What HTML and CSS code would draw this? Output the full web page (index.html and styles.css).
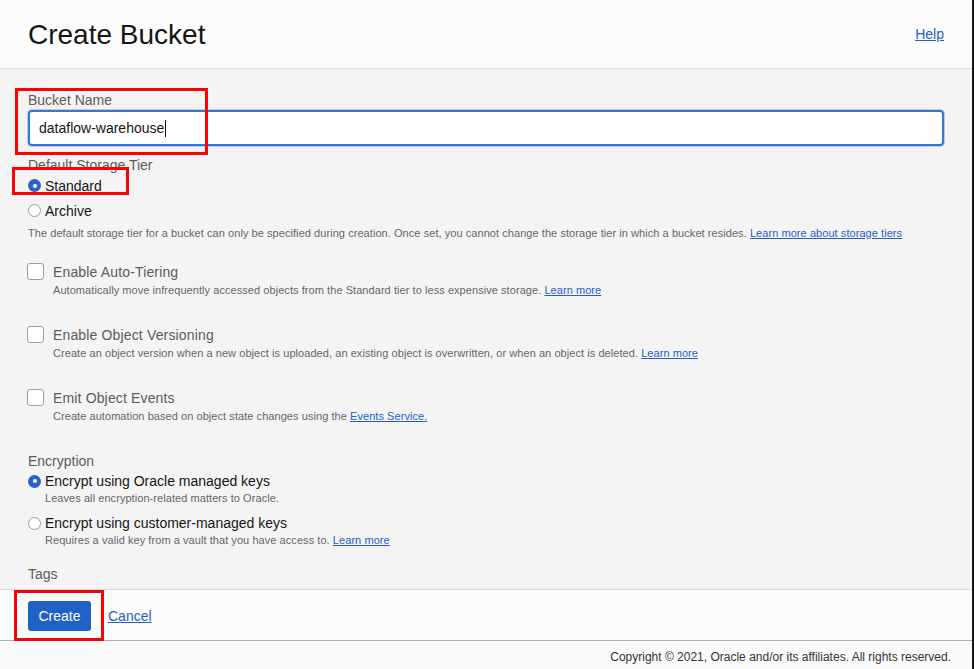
FILE: index.html
```html
<!DOCTYPE html>
<html lang="en">
<head>
<meta charset="utf-8">
<title>Create Bucket</title>
<link rel="stylesheet" href="styles.css">
</head>
<body>
<div class="page">
  <div class="panel">
    <header class="header">
      <h1 class="title">Create Bucket</h1>
      <a class="link help" href="#">Help</a>
    </header>

    <main class="content">
      <div class="field">
        <label class="label">Bucket Name</label>
        <div class="input"><span class="input-text">dataflow-warehouse</span><span class="caret"></span></div>
      </div>

      <div class="group tier">
        <div class="label label-tight">Default Storage Tier</div>
        <div class="radio-row"><span class="radio checked"></span><span class="radio-text">Standard</span></div>
        <div class="radio-row"><span class="radio"></span><span class="radio-text">Archive</span></div>
        <p class="hint">The default storage tier for a bucket can only be specified during creation. Once set, you cannot change the storage tier in which a bucket resides. <a class="link" href="#">Learn more about storage tiers</a></p>
      </div>

      <div class="check first">
        <span class="box"></span>
        <div class="check-body">
          <div class="check-label">Enable Auto-Tiering</div>
          <p class="hint">Automatically move infrequently accessed objects from the Standard tier to less expensive storage. <a class="link" href="#">Learn more</a></p>
        </div>
      </div>

      <div class="check">
        <span class="box"></span>
        <div class="check-body">
          <div class="check-label">Enable Object Versioning</div>
          <p class="hint">Create an object version when a new object is uploaded, an existing object is overwritten, or when an object is deleted. <a class="link" href="#">Learn more</a></p>
        </div>
      </div>

      <div class="check">
        <span class="box"></span>
        <div class="check-body">
          <div class="check-label">Emit Object Events</div>
          <p class="hint">Create automation based on object state changes using the <a class="link" href="#">Events Service.</a></p>
        </div>
      </div>

      <div class="group encryption">
        <div class="label">Encryption</div>
        <div class="opt">
          <div class="radio-row short"><span class="radio checked"></span><span class="radio-text">Encrypt using Oracle managed keys</span></div>
          <p class="hint indent">Leaves all encryption-related matters to Oracle.</p>
        </div>
        <div class="opt second">
          <div class="radio-row short"><span class="radio"></span><span class="radio-text">Encrypt using customer-managed keys</span></div>
          <p class="hint indent">Requires a valid key from a vault that you have access to. <a class="link" href="#">Learn more</a></p>
        </div>
      </div>

      <div class="label tags">Tags</div>
    </main>

    <div class="actions">
      <button class="btn-primary" type="button">Create</button>
      <a class="link cancel" href="#">Cancel</a>
    </div>

    <footer class="copyright">Copyright © 2021, Oracle and/or its affiliates. All rights reserved.</footer>
  </div>
  <div class="edge"></div>

  <div class="mark mark-name"></div>
  <div class="mark mark-standard"></div>
  <div class="mark mark-create"></div>
</div>
</body>
</html>
```

FILE: styles.css
```css
* { box-sizing: border-box; }

html, body {
  margin: 0;
  padding: 0;
  height: 100%;
}

body {
  font-family: "Liberation Sans", Arial, Helvetica, sans-serif;
  color: #161513;
  background: #f4f4f4;
  overflow: hidden;
}

.page {
  position: relative;
  display: flex;
  width: 974px;
  height: 669px;
}

.panel {
  flex: 1;
  display: flex;
  flex-direction: column;
  min-width: 0;
}

.edge {
  width: 2px;
  background: #161616;
}

/* header */
.header {
  height: 69px;
  flex: none;
  background: #fcfcfc;
  border-bottom: 1px solid #dcdcdc;
  display: flex;
  align-items: center;
  justify-content: space-between;
  padding: 2px 28px 0 28px;
}

.title {
  margin: 0;
  font-size: 28px;
  font-weight: 400;
  color: #161513;
}

.link {
  color: #1f5fc6;
  text-decoration: underline;
}

.help {
  font-size: 14px;
  margin-top: -2px;
}

/* content */
.content {
  flex: 1;
  overflow: hidden;
  background: #f4f4f4;
  padding: 23px 28px 0 28px;
}

.label {
  display: block;
  font-size: 14px;
  line-height: 17px;
  color: #5b5b5b;
}

.label-tight {
  line-height: 16px;
}

.input {
  margin-top: 1px;
  height: 36px;
  background: #fff;
  border: 2px solid #3b74d4;
  border-radius: 4px;
  box-shadow: 0 0 0 1px rgba(80, 130, 220, 0.35);
  display: flex;
  align-items: center;
  padding-left: 9px;
  font-size: 14px;
  color: #161513;
}

.caret {
  display: inline-block;
  width: 1px;
  height: 17px;
  background: #161513;
  margin-left: 1px;
}

.group.tier {
  margin-top: 11px;
}

.radio-row {
  height: 25px;
  display: flex;
  align-items: center;
  gap: 4px;
  font-size: 14px;
  color: #161513;
}

.radio-row.short {
  height: 18px;
}

.radio {
  width: 13px;
  height: 13px;
  border-radius: 50%;
  border: 1px solid #9b9ba2;
  background: #fff;
  flex: none;
  position: relative;
}

.radio.checked {
  border: none;
  background: #2a62c9;
}

.radio.checked::after {
  content: "";
  position: absolute;
  left: 4.5px;
  top: 4.5px;
  width: 4px;
  height: 4px;
  border-radius: 50%;
  background: #fff;
}

.hint {
  margin: 0;
  font-size: 11px;
  line-height: 14px;
  letter-spacing: 0.06px;
  color: #666;
}

.tier .hint {
  margin-top: 3px;
}

/* checkboxes */
.check {
  display: flex;
  gap: 9px;
  margin-top: 29px;
  margin-left: -1px;
}

.check.first {
  margin-top: 23px;
}

.box {
  width: 17px;
  height: 17px;
  border: 1px solid #9d9da4;
  border-radius: 3px;
  background: #fff;
  flex: none;
}

.check-label {
  font-size: 14px;
  line-height: 18px;
  letter-spacing: 0.15px;
  color: #5b5b5b;
}

.check-body .hint {
  margin-top: 2px;
}

/* encryption */
.group.encryption {
  margin-top: 30px;
}

.encryption .radio-row {
  margin-top: 2px;
}

.opt .hint {
  margin-top: 1px;
}

.opt.second {
  margin-top: 9px;
}

.indent {
  padding-left: 17px;
}

.tags {
  margin-top: 19px;
}

/* footer actions */
.actions {
  height: 52px;
  flex: none;
  background: #fcfcfc;
  border-top: 1px solid #dcdcdc;
  border-bottom: 1px solid #aeaeb6;
  display: flex;
  align-items: center;
  gap: 17px;
  padding: 2px 28px 0 28px;
}

.btn-primary {
  width: 63px;
  height: 30px;
  border: none;
  border-radius: 3px;
  background: #2160c6;
  color: #fff;
  font-family: inherit;
  font-size: 14px;
  padding: 0;
}

.cancel {
  font-size: 14px;
}

.copyright {
  flex: none;
  height: 28px;
  background: #fafafa;
  font-size: 12px;
  color: #333;
  display: flex;
  align-items: center;
  justify-content: flex-end;
  padding: 3px 21px 0 0;
}

/* annotation marks */
.mark {
  position: absolute;
  border: 3px solid #f00;
  pointer-events: none;
}

.mark-name {
  left: 15px;
  top: 88px;
  width: 193px;
  height: 67px;
}

.mark-standard {
  left: 12px;
  top: 167px;
  width: 117px;
  height: 28px;
}

.mark-create {
  left: 14px;
  top: 590px;
  width: 90px;
  height: 51px;
}
```
